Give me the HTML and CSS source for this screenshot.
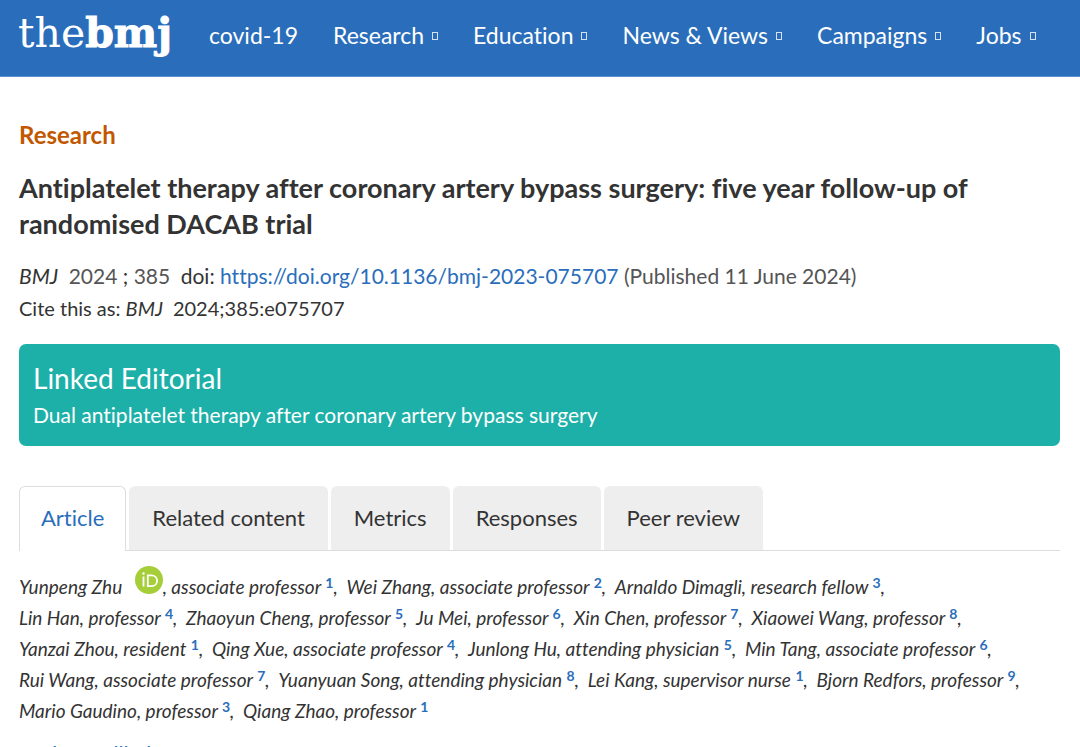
FILE: index.html
```html
<!DOCTYPE html>
<html lang="en">
<head>
<meta charset="utf-8">
<meta name="viewport" content="width=device-width, initial-scale=1">
<title>Antiplatelet therapy after coronary artery bypass surgery | The BMJ</title>
<link rel="stylesheet" href="styles.css">
</head>
<body>
<header class="site-header">
  <a class="logo" href="#">the<b>bmj</b></a>
  <nav class="main-nav">
    <a href="#">covid-19</a>
    <a class="has-menu" href="#">Research</a>
    <a class="has-menu" href="#">Education</a>
    <a class="has-menu" href="#">News &amp; Views</a>
    <a class="has-menu" href="#">Campaigns</a>
    <a class="has-menu" href="#">Jobs</a>
  </nav>
</header>
<main class="page">
  <p class="section-name">Research</p>
  <h1 class="title">Antiplatelet therapy after coronary artery bypass surgery: five year follow-up of randomised DACAB trial</h1>
  <div class="citation">
    <p><i>BMJ</i>&ensp;<span class="muted">2024</span> ; <span class="muted">385</span>&ensp;doi: <a href="#">https://doi.org/10.1136/bmj-2023-075707</a> <span class="muted">(Published 11 June 2024)</span></p>
    <p class="cite-as">Cite this as: <i>BMJ</i>&ensp;2024;385:e075707</p>
  </div>
  <section class="editorial">
    <h2>Linked Editorial</h2>
    <a href="#">Dual antiplatelet therapy after coronary artery bypass surgery</a>
  </section>
  <nav class="tabs">
    <a class="tab active" href="#">Article</a>
    <a class="tab" href="#">Related content</a>
    <a class="tab" href="#">Metrics</a>
    <a class="tab" href="#">Responses</a>
    <a class="tab" href="#">Peer review</a>
  </nav>
  <p class="authors">
    Yunpeng Zhu <a class="orcid" href="#" aria-label="ORCID profile"><svg viewBox="0 0 28 28" width="28" height="28"><circle cx="14" cy="14" r="14" fill="#a6ce39"/><path d="M8.5 10.5V20.5M12.8 9.3V20.2H16.4C24 20.2 24 9.3 16.4 9.3Z" fill="none" stroke="#fff" stroke-width="1.8"/><circle cx="8.5" cy="7.5" r="1.2" fill="#fff"/></svg></a>, associate professor <a href="#">1</a>,&ensp;Wei Zhang, associate professor <a href="#">2</a>,&ensp;Arnaldo Dimagli, research fellow <a href="#">3</a>,<br>
    Lin Han, professor <a href="#">4</a>,&ensp;Zhaoyun Cheng, professor <a href="#">5</a>,&ensp;Ju Mei, professor <a href="#">6</a>,&ensp;Xin Chen, professor <a href="#">7</a>,&ensp;Xiaowei Wang, professor <a href="#">8</a>,<br>
    Yanzai Zhou, resident <a href="#">1</a>,&ensp;Qing Xue, associate professor <a href="#">4</a>,&ensp;Junlong Hu, attending physician <a href="#">5</a>,&ensp;Min Tang, associate professor <a href="#">6</a>,<br>
    Rui Wang, associate professor <a href="#">7</a>,&ensp;Yuanyuan Song, attending physician <a href="#">8</a>,&ensp;Lei Kang, supervisor nurse <a href="#">1</a>,&ensp;Bjorn Redfors, professor <a href="#">9</a>,<br>
    Mario Gaudino, professor <a href="#">3</a>,&ensp;Qiang Zhao, professor <a href="#">1</a>
  </p>
  <a class="affiliations" href="#">Author affiliations</a>
</main>
</body>
</html>
```
FILE: styles.css
```css
*, *::after { box-sizing: border-box; }
html { overflow: hidden; }
body {
  margin: 0;
  height: 100vh;
  overflow: hidden;
  background: #fff;
  color: #333;
  font-family: Lato, "Open Sans", sans-serif;
  font-size: 21px;
  font-variant-ligatures: none;
}
p, h1, h2 { margin: 0; }
a { color: #2a6ebb; text-decoration: none; }
.site-header {
  display: flex;
  height: 77px;
  padding: 0 18px;
  background: #2a6ebb;
  border-bottom: 1px solid #5a90cc;
}
.logo {
  width: 154px;
  color: #fff;
  font: 41px/66px "DejaVu Serif", serif;
  white-space: nowrap;
}
.logo b { -webkit-text-stroke: 1px #fff; }
.main-nav {
  display: flex;
  gap: 35px;
  margin-left: 37px;
}
.main-nav a {
  color: #fff;
  font-size: 23px;
  line-height: 70px;
  white-space: nowrap;
}
.has-menu::after {
  content: "";
  display: inline-block;
  width: 6px;
  height: 8px;
  margin-left: 8px;
  border: 1px solid #d4e2f1;
  vertical-align: 4px;
}
.page { padding: 42px 20px 0 19px; }
.section-name {
  color: #c25700;
  font-size: 24px;
  font-weight: 700;
  line-height: 32px;
}
.title {
  margin-top: 19px;
  font-size: 27px;
  font-weight: 700;
  line-height: 36px;
}
.citation {
  margin-top: 18px;
  line-height: 32px;
}
.cite-as { font-size: 20px; }
.muted { color: #555; }
.editorial {
  margin-top: 20px;
  padding: 15px 14px 13px;
  border-radius: 7px;
  background: #1db0a8;
  color: #fff;
}
.editorial h2 {
  font-size: 28px;
  font-weight: 400;
  line-height: 38px;
}
.editorial a {
  display: block;
  color: #fff;
  line-height: 36px;
}
.tabs {
  display: flex;
  gap: 3px;
  margin-top: 40px;
  border-bottom: 1px solid #ddd;
}
.tab {
  padding: 0 22px 2px;
  border: 1px solid #eee;
  border-bottom: 0;
  border-radius: 6px 6px 0 0;
  background: #eee;
  color: #333;
  font-size: 22px;
  line-height: 61px;
  white-space: nowrap;
}
.active {
  margin-bottom: -1px;
  padding: 0 21px 2px;
  border-color: #ddd;
  background: #fff;
  color: #2a6ebb;
}
.authors {
  margin-top: 20px;
  font-size: 19px;
  font-style: italic;
  line-height: 31px;
  white-space: nowrap;
}
.authors a {
  font-size: 14px;
  font-style: normal;
  font-weight: 700;
  line-height: 0;
  vertical-align: 6px;
}
.authors .orcid {
  margin-left: 8px;
  vertical-align: 0;
}
.orcid svg {
  margin: -10px 0;
  vertical-align: 10px;
}
.affiliations {
  display: block;
  margin-top: 13px;
  line-height: 30px;
}
```
